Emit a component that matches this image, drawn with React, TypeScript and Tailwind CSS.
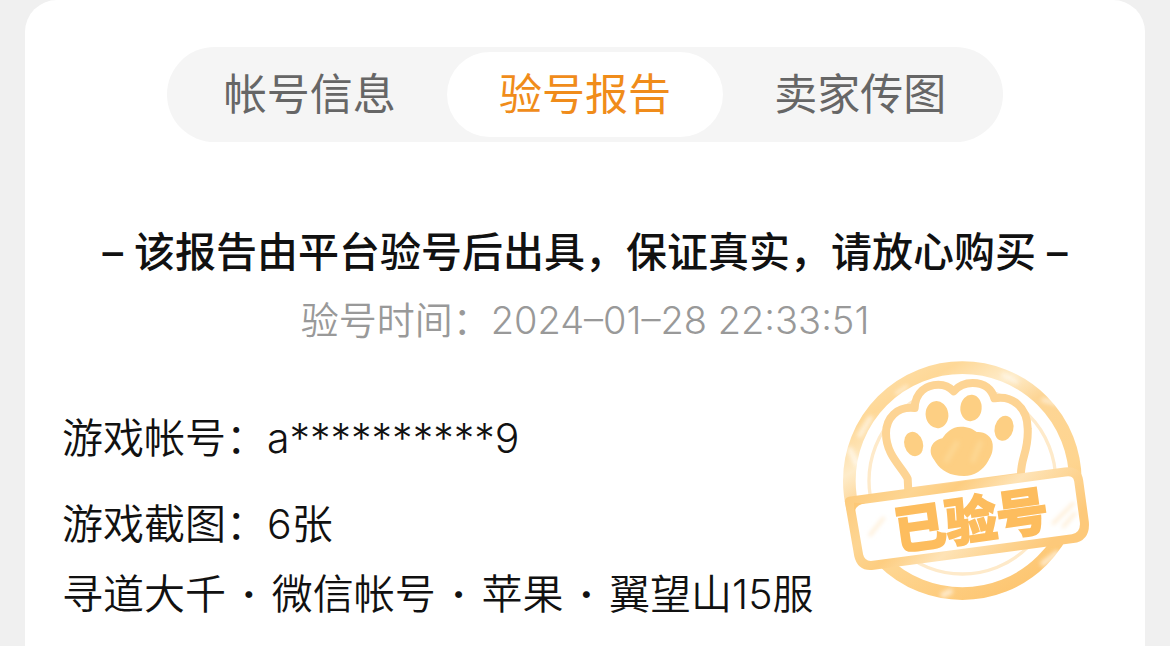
import React, { useState } from "react";

const tabs = ["帐号信息", "验号报告", "卖家传图"];

const details = ["寻道大千", "微信帐号", "苹果", "翼望山15服"];

const VerifiedStamp = () => {
  return (
    <svg
      className="absolute right-[45px] top-[350px] w-[270px] h-[260px]"
      viewBox="0 0 810 780"
      fill="none"
    >
      <defs>
        <linearGradient id="ring" x1="0.1" y1="0" x2="0.7" y2="1">
          <stop offset="0" stopColor="#fee0ac" />
          <stop offset="0.15" stopColor="#fed897" />
          <stop offset="0.3" stopColor="#feecca" />
          <stop offset="0.42" stopColor="#fdd595" />
          <stop offset="0.7" stopColor="#fed590" />
          <stop offset="1" stopColor="#fdc672" />
        </linearGradient>
        <linearGradient id="band" x1="0" y1="0" x2="1" y2="0.4">
          <stop offset="0" stopColor="#fdc876" />
          <stop offset="0.3" stopColor="#fdd592" />
          <stop offset="0.45" stopColor="#fdcd80" />
          <stop offset="0.65" stopColor="#fee3b6" />
          <stop offset="0.85" stopColor="#fdd390" />
          <stop offset="1" stopColor="#fdc97a" />
        </linearGradient>
        <filter id="soft" x="-50%" y="-50%" width="200%" height="200%">
          <feGaussianBlur stdDeviation="7" />
        </filter>
      </defs>

      <circle cx="397" cy="392" r="339" stroke="url(#ring)" strokeWidth="38" />
      <circle cx="397" cy="392" r="280" stroke="#feeaca" strokeWidth="10" />

      {/* worn ink on the ring */}
      <g stroke="#fff" strokeLinecap="round" filter="url(#soft)" opacity="0.6">
        <path d="M120 205l-30 50" strokeWidth="16" />
        <path d="M60 300l20 40" strokeWidth="18" />
        <path d="M520 75l40 20M640 150l40 10" strokeWidth="12" />
        <path d="M640 640l40 -30M340 735l20 -10" strokeWidth="18" />
        <path d="M200 130l30 -20" strokeWidth="10" />
      </g>

      {/* paw */}
      <path
        d="M235 425L233 386C215 350 168 315 168 250C168 205 200 168 254 174C256 125 290 104 325 104C346 104 360 112 371 124C385 108 405 99 428 99C464 99 485 118 493 145C545 135 592 170 593 235C597 305 570 325 573 380Z"
        fill="#fff"
        stroke="#fdd494"
        strokeWidth="24"
        strokeLinejoin="round"
      />
      <g fill="#fdcf83">
        <ellipse cx="321" cy="194" rx="34" ry="41" transform="rotate(-8 321 194)" />
        <ellipse cx="423" cy="174" rx="32" ry="40" transform="rotate(5 423 174)" />
        <ellipse cx="522" cy="235" rx="28" ry="38" transform="rotate(14 522 235)" />
        <ellipse cx="251" cy="282" rx="28" ry="37" transform="rotate(-16 251 282)" />
        <path d="M392 230C417 230 428 237 440 246C462 244 486 257 488 283C490 307 482 320 475 332C459 361 433 377 402 378C362 378 332 361 318 338C311 326 301 318 302 300C304 278 322 268 337 265C349 247 365 231 392 230Z" />
      </g>
      <path
        d="M350 330l30 -50M430 330l20 -50"
        stroke="#fdd793"
        strokeWidth="16"
        strokeLinecap="round"
        filter="url(#soft)"
      />

      {/* banner */}
      <path
        d="M58 454L705 366Q741 361 746 392L763 516Q767 560 728 566L130 646Q94 651 86 616Z"
        fill="#fff"
        stroke="url(#band)"
        strokeWidth="27"
        strokeLinejoin="round"
      />
      <path d="M72 490Q76 464 106 460L72 458Z" fill="#fdc876" />
      <g stroke="#feecd0" strokeWidth="9" strokeLinecap="round" filter="url(#soft)">
        <path d="M120 555l40 -50M670 520l60 -60M700 530l35 -40" />
      </g>
      <text
        x="201"
        y="600"
        transform="rotate(-8 201 600)"
        fill="#fdbd5e"
        stroke="#fdbd5e"
        strokeWidth="5"
        className="font-['Noto_Sans_CJK_SC',sans-serif] font-black text-[155px]"
      >
        已验号
      </text>
    </svg>
  );
};

const App = () => {
  const [active, setActive] = useState(1);

  return (
    <div className="min-h-screen bg-[#f0f0f0] px-[25px] flex font-['Inter','Noto_Sans_CJK_SC',sans-serif]">
      <main className="relative w-full bg-white rounded-t-[32px] pt-[47px] text-[#111]">
        <nav className="mx-auto w-[836px] max-w-full h-[95px] p-[5px] grid grid-cols-3 rounded-full bg-[#f5f5f5]">
          {tabs.map((tab, index) => (
            <button
              key={tab}
              type="button"
              onClick={() => setActive(index)}
              className={
                index === active
                  ? "rounded-full bg-white text-[43px] font-normal text-[#f08c1a]"
                  : "rounded-full text-[43px] font-normal text-[#666]"
              }
            >
              {tab}
            </button>
          ))}
        </nav>

        <h1 className="mt-20 text-center text-[41px] leading-[60px] font-medium whitespace-nowrap">
          – 该报告由平台验号后出具，保证真实，请放心购买 –
        </h1>
        <p className="mt-2 text-center text-[38px] leading-[60px] font-[350] text-[#999]">
          验号时间：2024–01–28 22:33:51
        </p>

        <section className="mt-14 px-[37px] text-[41px] leading-[64px] font-[350]">
          <p>游戏帐号：a**********9</p>
          <p className="mt-[22px]">游戏截图：6张</p>
          <p className="mt-[6px] flex gap-4">
            {details.map((item, index) => (
              <React.Fragment key={item}>
                {index > 0 && <span className="font-bold">·</span>}
                <span>{item}</span>
              </React.Fragment>
            ))}
          </p>
        </section>

        <VerifiedStamp />
      </main>
    </div>
  );
};

export default App;
